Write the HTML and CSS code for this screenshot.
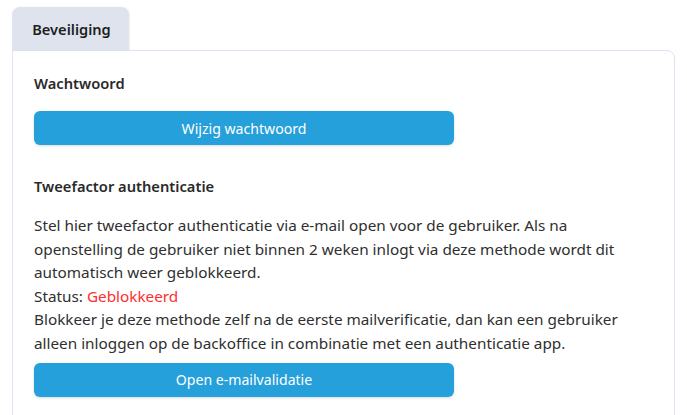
FILE: index.html
```html
<!DOCTYPE html>
<html lang="nl">
<head>
<meta charset="utf-8">
<title>Beveiliging</title>
<link rel="stylesheet" href="styles.css">
</head>
<body>
<div class="page">
  <div class="tabs">
    <div class="tab active">Beveiliging</div>
  </div>
  <div class="card">
    <h3 class="section-title">Wachtwoord</h3>
    <button class="btn">Wijzig wachtwoord</button>
    <h3 class="section-title second">Tweefactor authenticatie</h3>
    <p class="text">Stel hier tweefactor authenticatie via e-mail open voor de gebruiker. Als na openstelling de gebruiker niet binnen 2 weken inlogt via deze methode wordt dit automatisch weer geblokkeerd.<br>Status: <span class="status-blocked">Geblokkeerd</span><br>Blokkeer je deze methode zelf na de eerste mailverificatie, dan kan een gebruiker alleen inloggen op de backoffice in combinatie met een authenticatie app.</p>
    <button class="btn">Open e-mailvalidatie</button>
  </div>
</div>
</body>
</html>
```

FILE: styles.css
```css
html, body {
  margin: 0;
  padding: 0;
  background: #ffffff;
}
body {
  font-family: "Noto Sans", "Open Sans", sans-serif;
  color: #2b2b2b;
  font-size: 15px;
}
.page {
  padding: 7px 12px 0 12px;
}
.tabs {
  display: flex;
}
.tab {
  width: 117px;
  height: 43px;
  box-sizing: border-box;
  display: flex;
  align-items: center;
  justify-content: center;
  padding-left: 2px;
  background: #dee3ee;
  border-radius: 8px 8px 0 0;
  font-weight: 600;
  font-size: 14.6px;
  color: #1e1e1e;
  box-shadow: 1px 0 2px rgba(0,0,0,0.06);
}
.card {
  border: 1px solid #dde3f0;
  border-radius: 0 8px 0 0;
  padding: 20px 20px 19px 21px;
}
.section-title {
  margin: 0 0 16px 0;
  font-size: 14.7px;
  font-weight: 600;
  line-height: 24px;
  color: #2a2a2a;
}
.section-title.second {
  margin-top: 29px;
}
.btn {
  display: block;
  width: 420px;
  height: 34px;
  border: none;
  border-radius: 6px;
  background: #26a0da;
  color: #ffffff;
  font-family: inherit;
  font-size: 14.1px;
  box-shadow: 0 1px 3px rgba(0,0,0,0.15);
  padding: 0;
}
.text {
  margin: 16px 0 7px 0;
  max-width: 603px;
  line-height: 23.6px;
  font-size: 15.3px;
  color: #2f2f2f;
}
.status-blocked {
  color: #ff2e2e;
}
```
